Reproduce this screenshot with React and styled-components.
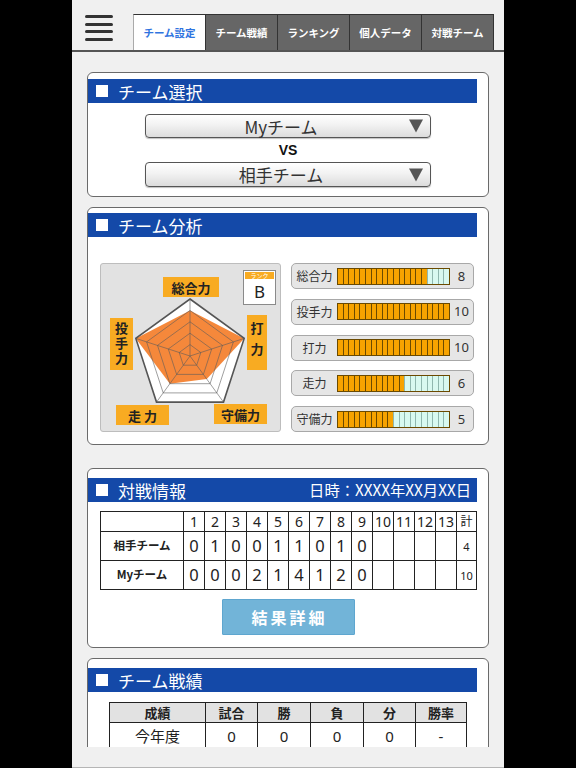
import React from 'react';
import styled, { createGlobalStyle } from 'styled-components';

const Global = createGlobalStyle`
  html, body { margin: 0; padding: 0; background: #000; }
  body { font-family: "Noto Sans CJK JP", "Noto Sans", sans-serif; }
  * { box-sizing: border-box; }
`;

const Screen = styled.div`
  width: 432px;
  height: 768px;
  margin: 0 auto;
  background: #f0f0f0;
  display: flex;
  flex-direction: column;
  overflow: hidden;
`;

const Header = styled.header`
  height: 52px;
  flex: none;
  display: flex;
  align-items: flex-start;
  padding: 14px 0 0 13px;
  border-bottom: 2px solid #555;
`;

const Burger = styled.div`
  width: 28px;
  display: flex;
  flex-direction: column;
  gap: 4.5px;
  margin-top: 1px;
  span {
    display: block;
    height: 3px;
    border-radius: 2px;
    background: #333;
  }
`;

const Tabs = styled.nav`
  display: flex;
  margin-left: 20px;
  height: 36px;
`;

const Tab = styled.div`
  width: 73px;
  height: 36px;
  display: flex;
  align-items: center;
  justify-content: center;
  font-size: 10.5px;
  font-weight: bold;
  color: ${p => (p.$active ? '#2f74e0' : '#fff')};
  background: ${p => (p.$active ? '#fff' : '#666')};
  border: 1px solid #333;
  border-left-color: ${p => (p.$active ? '#aaa' : '#333')};
  border-bottom: none;
  & + & { margin-left: -1px; }
`;

const Content = styled.main`
  flex: 1;
  overflow: hidden;
  padding: 20px 15px 0;
`;

const Footer = styled.footer`
  height: 21px;
  flex: none;
  background: #f0f0f0;
  border-bottom: 1px solid #b5b5b5;
`;

const Card = styled.section`
  background: #fff;
  border: 1px solid #6a6a6a;
  border-radius: 6px;
  margin-top: ${p => p.$mt || 0}px;
  padding-bottom: ${p => p.$pb || 0}px;
`;

const Bar = styled.div`
  height: 24px;
  margin: ${p => p.$mt}px 11px 0 0;
  background: #1449a8;
  display: flex;
  align-items: center;
  padding: 0 6px 0 8px;
  color: #fff;
`;

const Square = styled.span`
  width: 12px;
  height: 12px;
  background: #fff;
  margin-right: 10px;
  flex: none;
`;

const BarTitle = styled.span`
  font-size: 17px;
  line-height: 1;
  flex: 1;
`;

const BarNote = styled.span`
  font-size: 15.3px;
  line-height: 1;
`;

const SelectArea = styled.div`
  display: flex;
  flex-direction: column;
  align-items: center;
  padding-top: 11px;
`;

const Select = styled.div`
  width: 286px;
  height: ${p => p.$h}px;
  border: 1px solid #555;
  border-radius: 4px;
  background: linear-gradient(#ffffff, #f2f2f2 45%, #dcdcdc);
  box-shadow: 0 1px 1px rgba(0,0,0,0.25);
  display: flex;
  align-items: center;
  position: relative;
  padding: 0 14px 0 0;
  color: #333;
  font-size: 17px;
`;

const SelectText = styled.span`
  flex: 1;
  text-align: center;
  line-height: 1;
`;

const Caret = styled.span`
  position: absolute;
  right: 7px;
  top: 50%;
  transform: translateY(-50%);
  width: 0;
  height: 0;
  border-left: 7px solid transparent;
  border-right: 7px solid transparent;
  border-top: 13px solid #555;
`;

const Vs = styled.div`
  height: 24px;
  display: flex;
  align-items: center;
  font-family: "Liberation Sans", Arial, sans-serif;
  font-weight: bold;
  font-size: 14px;
  color: #111;
`;

const AnalysisBody = styled.div`
  display: flex;
  gap: 10px;
  padding: 26px 14px 0 12px;
`;

const Panel = styled.div`
  width: 181px;
  height: 169px;
  flex: none;
  background: #e2e2e2;
  border: 1px solid #bdbdbd;
  border-radius: 3px;
  position: relative;
`;

const ChartSvg = styled.svg`
  position: absolute;
  left: 0;
  top: 0;
`;

const Label = styled.span`
  position: absolute;
  left: ${p => p.$x}px;
  top: ${p => p.$y}px;
  width: ${p => p.$w}px;
  height: ${p => p.$h}px;
  background: #f8ab22;
  color: #222;
  font-weight: bold;
  font-size: 13px;
  line-height: 1;
  display: flex;
  align-items: center;
  justify-content: center;
  writing-mode: ${p => (p.$vertical ? 'vertical-rl' : 'horizontal-tb')};
  letter-spacing: ${p => p.$ls || 0}px;
`;

const Rank = styled.div`
  position: absolute;
  left: 142px;
  top: 6px;
  width: 33px;
  height: 35px;
  background: #fff;
  border: 1px solid #8a8a8a;
  display: flex;
  flex-direction: column;
`;

const RankHead = styled.div`
  height: 7px;
  margin: 1px 1px 0;
  background: #f8ab22;
  color: #fff;
  font-size: 6px;
  line-height: 7px;
  text-align: center;
`;

const RankValue = styled.div`
  flex: 1;
  display: flex;
  align-items: center;
  justify-content: center;
  font-family: "Noto Sans", sans-serif;
  font-size: 17px;
  color: #222;
`;

const Meters = styled.div`
  width: 183px;
  display: flex;
  flex-direction: column;
  justify-content: space-between;
  height: 169px;
`;

const MeterRow = styled.div`
  height: 26px;
  border: 1px solid #a8a8a8;
  border-radius: 5px;
  background: #e6e6e6;
  display: grid;
  grid-template-columns: 45px 113px 1fr;
  align-items: center;
`;

const MeterLabel = styled.span`
  font-size: 12px;
  color: #333;
  text-align: center;
  line-height: 1;
`;

const Segments = styled.div`
  height: 17px;
  display: flex;
  border: 1px solid #6b4a00;
`;

const Seg = styled.span`
  flex: 1;
  background: ${p => (p.$on ? '#f7a300' : '#d8f9f0')};
  border-left: 1px solid ${p => (p.$on ? '#6b4a00' : '#8fb7ae')};
  &:first-child { border-left: none; }
`;

const MeterValue = styled.span`
  font-family: "Noto Sans", sans-serif;
  font-size: 13px;
  color: #333;
  text-align: center;
  line-height: 1;
`;

const ScoreTable = styled.table`
  border-collapse: collapse;
  table-layout: fixed;
  width: 376px;
  margin: 9px 0 0 12px;
  td {
    border: 1.5px solid #222;
    text-align: center;
    padding: 0;
    color: #222;
    font-family: "Noto Sans", "Noto Sans CJK JP", sans-serif;
  }
`;

const HeadRow = styled.tr`
  height: 20px;
  td { font-size: 14px; line-height: 1; }
`;

const ScoreRow = styled.tr`
  height: 29px;
  td { font-size: 16.5px; line-height: 1; }
`;

const TeamCell = styled.td`
  && { font-size: 11.5px; font-weight: bold; font-family: "Noto Sans CJK JP", sans-serif; }
`;

const SmallCell = styled.td`
  && { font-size: ${p => p.$fs || 11}px; }
`;

const ButtonWrap = styled.div`
  display: flex;
  justify-content: center;
  margin-top: 9px;
`;

const DetailButton = styled.button`
  width: 133px;
  height: 36px;
  background: #72b4d8;
  border: 1px solid #5ea6cf;
  border-radius: 1px;
  color: #fff;
  font-family: "Noto Sans CJK JP", sans-serif;
  font-size: 16px;
  font-weight: bold;
  letter-spacing: 3px;
  padding: 0 0 0 3px;
`;

const RecordTable = styled.table`
  border-collapse: collapse;
  table-layout: fixed;
  width: 357px;
  margin: 10px auto 0;
  td {
    border: 1.5px solid #222;
    text-align: center;
    padding: 0;
    color: #222;
    line-height: 1;
  }
`;

const RecordHead = styled.tr`
  height: 20px;
  td { background: #e2e2e2; font-size: 13px; font-weight: bold; }
`;

const RecordRow = styled.tr`
  height: 28px;
  td { font-size: 15px; font-family: "Noto Sans", "Noto Sans CJK JP", sans-serif; }
`;

const tabs = ['チーム設定', 'チーム戦績', 'ランキング', '個人データ', '対戦チーム'];

const meters = [
  { label: '総合力', value: 8 },
  { label: '投手力', value: 10 },
  { label: '打力', value: 10 },
  { label: '走力', value: 6 },
  { label: '守備力', value: 5 },
];

// angle order: top, right, bottom-right, bottom-left, left
const radarValues = [8, 10, 5, 6, 10];
const CX = 89;
const CY = 92;
const R = 57;
const angles = [-90, -18, 54, 126, 198].map(a => (a * Math.PI) / 180);
const pt = (i, r) => [CX + r * Math.cos(angles[i]), CY + r * Math.sin(angles[i])];
const poly = rs => rs.map((r, i) => pt(i, r).map(n => n.toFixed(1)).join(',')).join(' ');

function Radar() {
  const levels = [1, 2, 3, 4, 5];
  return (
    <ChartSvg width="179" height="167" viewBox="0 0 179 167">
      <polygon points={poly([R, R, R, R, R])} fill="#fff" />
      <polygon points={poly(radarValues.map(v => (R * v) / 10))} fill="#f5883b" />
      {levels.map(l => (
        <polygon
          key={l}
          points={poly([0, 0, 0, 0, 0].map(() => (R * l) / 5))}
          fill="none"
          stroke={l === 5 ? '#555' : 'rgba(90,90,90,0.65)'}
          strokeWidth={l === 5 ? 1.6 : 0.9}
        />
      ))}
      {angles.map((_, i) => {
        const [x, y] = pt(i, R);
        return <line key={i} x1={CX} y1={CY} x2={x} y2={y} stroke="rgba(90,90,90,0.65)" strokeWidth="0.9" />;
      })}
    </ChartSvg>
  );
}

const innings1 = ['0', '1', '0', '0', '1', '1', '0', '1', '0', '', '', '', ''];
const innings2 = ['0', '0', '0', '2', '1', '4', '1', '2', '0', '', '', '', ''];

export default function App() {
  return (
    <>
      <Global />
      <Screen>
        <Header>
          <Burger>
            <span /><span /><span /><span />
          </Burger>
          <Tabs>
            {tabs.map((t, i) => (
              <Tab key={t} $active={i === 0}>{t}</Tab>
            ))}
          </Tabs>
        </Header>

        <Content>
          <Card $pb={9}>
            <Bar $mt={6}>
              <Square />
              <BarTitle>チーム選択</BarTitle>
            </Bar>
            <SelectArea>
              <Select $h={24}>
                <SelectText>Myチーム</SelectText>
                <Caret />
              </Select>
              <Vs>VS</Vs>
              <Select $h={25}>
                <SelectText>相手チーム</SelectText>
                <Caret />
              </Select>
            </SelectArea>
          </Card>

          <Card $mt={10} $pb={12}>
            <Bar $mt={5}>
              <Square />
              <BarTitle>チーム分析</BarTitle>
            </Bar>
            <AnalysisBody>
              <Panel>
                <Radar />
                <Label $x={62} $y={13} $w={56} $h={20}>総合力</Label>
                <Label $x={9} $y={54} $w={23} $h={52} $vertical $ls={2}>投手力</Label>
                <Label $x={146} $y={51} $w={20} $h={55} $vertical $ls={8}>打力</Label>
                <Label $x={15} $y={141} $w={53} $h={20}>走 力</Label>
                <Label $x={113} $y={140} $w={53} $h={20}>守備力</Label>
                <Rank>
                  <RankHead>ランク</RankHead>
                  <RankValue>B</RankValue>
                </Rank>
              </Panel>
              <Meters>
                {meters.map(m => (
                  <MeterRow key={m.label}>
                    <MeterLabel>{m.label}</MeterLabel>
                    <Segments>
                      {Array.from({ length: 20 }, (_, i) => (
                        <Seg key={i} $on={i < m.value * 2} />
                      ))}
                    </Segments>
                    <MeterValue>{m.value}</MeterValue>
                  </MeterRow>
                ))}
              </Meters>
            </AnalysisBody>
          </Card>

          <Card $mt={23} $pb={12}>
            <Bar $mt={9}>
              <Square />
              <BarTitle>対戦情報</BarTitle>
              <BarNote>日時：XXXX年XX月XX日</BarNote>
            </Bar>
            <ScoreTable>
              <colgroup>
                <col style={{ width: 83 }} />
                {Array.from({ length: 13 }, (_, i) => <col key={i} style={{ width: 21 }} />)}
                <col style={{ width: 20 }} />
              </colgroup>
              <tbody>
                <HeadRow>
                  <td />
                  {Array.from({ length: 13 }, (_, i) => <td key={i}>{i + 1}</td>)}
                  <SmallCell $fs={12}>計</SmallCell>
                </HeadRow>
                <ScoreRow>
                  <TeamCell>相手チーム</TeamCell>
                  {innings1.map((s, i) => <td key={i}>{s}</td>)}
                  <SmallCell>4</SmallCell>
                </ScoreRow>
                <ScoreRow>
                  <TeamCell>Myチーム</TeamCell>
                  {innings2.map((s, i) => <td key={i}>{s}</td>)}
                  <SmallCell>10</SmallCell>
                </ScoreRow>
              </tbody>
            </ScoreTable>
            <ButtonWrap>
              <DetailButton>結果詳細</DetailButton>
            </ButtonWrap>
          </Card>

          <Card $mt={10} $pb={12}>
            <Bar $mt={9}>
              <Square />
              <BarTitle>チーム戦績</BarTitle>
            </Bar>
            <RecordTable>
              <colgroup>
                <col style={{ width: 96 }} />
                <col style={{ width: 52 }} />
                <col style={{ width: 53 }} />
                <col style={{ width: 53 }} />
                <col style={{ width: 52 }} />
                <col style={{ width: 51 }} />
              </colgroup>
              <tbody>
                <RecordHead>
                  <td>成績</td><td>試合</td><td>勝</td><td>負</td><td>分</td><td>勝率</td>
                </RecordHead>
                <RecordRow>
                  <td>今年度</td><td>0</td><td>0</td><td>0</td><td>0</td><td>-</td>
                </RecordRow>
              </tbody>
            </RecordTable>
          </Card>
        </Content>
        <Footer />
      </Screen>
    </>
  );
}
